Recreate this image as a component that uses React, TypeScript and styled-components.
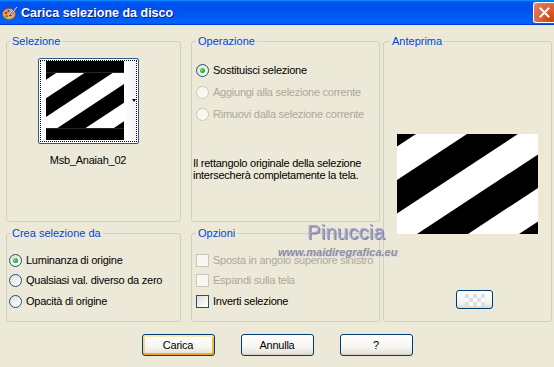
import React from "react";
import styled, { createGlobalStyle, css } from "styled-components";

const GlobalStyle = createGlobalStyle`
  html, body { margin: 0; padding: 0; background: #ECE9D8; }
  body { font-family: "Liberation Sans", Arial, sans-serif; font-size: 11px; letter-spacing: -0.25px; color: #000; }
  * { box-sizing: border-box; }
`;

const Window = styled.div`
  position: relative;
  width: 554px;
  height: 367px;
  background: #ece9d8;
  display: flex;
  flex-direction: column;
  overflow: hidden;
`;

const TitleBar = styled.div`
  height: 25px;
  flex: none;
  display: flex;
  align-items: center;
  padding: 0 0 0 2px;
  background: linear-gradient(
    180deg,
    #0997ff 0%,
    #0053ee 8%,
    #0050ee 40%,
    #0062f8 86%,
    #0062f8 92%,
    #005bff 94%,
    #003dd7 96%,
    #003dd7 100%
  );
`;

const TitleText = styled.div`
  flex: 1;
  margin-left: 3px;
  color: #fff;
  font-family: "Liberation Sans", Arial, sans-serif;
  font-weight: bold;
  font-size: 12.5px;
  letter-spacing: 0;
  text-shadow: 1px 1px 0 #0a1883;
`;

const CloseButton = styled.div`
  width: 21px;
  height: 21px;
  border: 1px solid #fff;
  border-right: none;
  border-radius: 3px 0 0 3px;
  background: radial-gradient(circle at 85% 85%, #cc4600 0%, #dc5a27 35%, #e07050 70%, #e8886a 100%);
  display: flex;
  align-items: center;
  justify-content: center;
`;

const Body = styled.div`
  display: flex;
  flex-direction: column;
  padding: 16px 0 0 6px;
`;

const Panels = styled.div`
  display: flex;
  align-items: flex-start;
  gap: 3px;
`;

const LeftGrid = styled.div`
  display: grid;
  grid-template-columns: 175px 189px;
  grid-template-rows: 181px 89px;
  column-gap: 10px;
  row-gap: 11px;
`;

const Group = styled.div<{ $w?: number; $h?: number }>`
  position: relative;
  border: 1px solid #d0d0bf;
  border-radius: 3px;
  ${(p) =>
    p.$w &&
    css`
      width: ${p.$w}px;
    `}
  ${(p) =>
    p.$h &&
    css`
      height: ${p.$h}px;
    `}
`;

const GroupLabel = styled.span<{ $left?: number }>`
  position: absolute;
  top: -7px;
  left: ${(p) => p.$left ?? 3}px;
  padding: 0 2px;
  line-height: 13px;
  background: #ece9d8;
  color: #0046d5;
  letter-spacing: 0;
`;

const SelContent = styled.div`
  display: flex;
  flex-direction: column;
  align-items: center;
  padding: 16px 11px 0 0;
`;

const ThumbFrame = styled.div`
  width: 101px;
  height: 86px;
  border: 1px solid #2b5d8c;
  border-radius: 2px;
  background: #fff;
  padding: 1px;
`;

const FocusRing = styled.div`
  height: 100%;
  border: 1px dotted #000;
  display: flex;
  padding-left: 5px;
`;

const ArrowCol = styled.div`
  flex: 1;
  display: flex;
  align-items: center;
  justify-content: flex-end;
  background: linear-gradient(90deg, #ffffff 0%, #f3f3f3 100%);
`;

const DownArrow = styled.span`
  width: 0;
  height: 0;
  border-left: 2.5px solid transparent;
  border-right: 2.5px solid transparent;
  border-top: 3px solid #000;
  margin-top: -1px;
`;

const FileName = styled.div`
  margin-top: 10px;
  line-height: 13px;
`;

const Stack = styled.div<{ $pt: number; $pl: number }>`
  display: flex;
  flex-direction: column;
  padding: ${(p) => p.$pt}px 0 0 ${(p) => p.$pl}px;
`;

const OptionRow = styled.div<{ $h: number; $disabled?: boolean }>`
  height: ${(p) => p.$h}px;
  display: flex;
  align-items: center;
  gap: 4px;
  line-height: 13px;
  white-space: nowrap;
  color: ${(p) => (p.$disabled ? "#aca899" : "#000")};
`;

const Radio = styled.span<{ $checked?: boolean; $disabled?: boolean }>`
  position: relative;
  flex: none;
  width: 13px;
  height: 13px;
  border-radius: 50%;
  border: 1px solid ${(p) => (p.$disabled ? "#cac8bb" : "#1c5180")};
  background: ${(p) =>
    p.$disabled ? "#f8f7f2" : "linear-gradient(135deg, #dcdcd7 0%, #f4f4f0 60%, #ffffff 100%)"};
  ${(p) =>
    p.$checked &&
    css`
      &::after {
        content: "";
        position: absolute;
        left: 3px;
        top: 3px;
        width: 5px;
        height: 5px;
        border-radius: 50%;
        background: radial-gradient(circle at 35% 35%, #6ee46a 0%, #21a121 70%, #1a8a1a 100%);
      }
    `}
`;

const Check = styled.span<{ $disabled?: boolean }>`
  flex: none;
  width: 13px;
  height: 13px;
  border: 1px solid ${(p) => (p.$disabled ? "#cac8bb" : "#1c5180")};
  background: ${(p) =>
    p.$disabled ? "#f8f7f2" : "linear-gradient(135deg, #dcdcd7 0%, #f4f4f0 60%, #ffffff 100%)"};
`;

const Description = styled.div`
  margin: 32px 0 0 -3px;
  line-height: 12px;
`;

const PreviewContent = styled.div`
  display: flex;
  flex-direction: column;
  align-items: center;
  padding-top: 92px;
`;

const SmallButton = styled.div`
  margin: 56px 0 0 14px;
  width: 37px;
  height: 19px;
  border: 1px solid #003c74;
  border-radius: 3px;
  background: linear-gradient(180deg, #ffffff 0%, #f4f3ee 70%, #dcd8cc 100%);
  display: flex;
  align-items: center;
  justify-content: center;
`;

const ButtonRow = styled.div`
  display: flex;
  justify-content: center;
  gap: 26px;
  margin: 12px 6px 0 0;
`;

const Button = styled.div<{ $default?: boolean }>`
  width: 73px;
  height: 22px;
  border: 1px solid #003c74;
  border-radius: 3px;
  background: linear-gradient(180deg, #ffffff 0%, #f6f5f0 60%, #e8e6dc 88%, #d6d0c5 100%);
  display: flex;
  align-items: center;
  justify-content: center;
  line-height: 13px;
  ${(p) =>
    p.$default &&
    css`
      box-shadow: inset 0 2px 0 #ffe8b0, inset 0 -2px 0 #f0a82a, inset 2px 0 0 #fbd68a, inset -2px 0 0 #f2b748;
    `}
`;

const Watermark = styled.div`
  position: absolute;
  left: 307px;
  top: 221px;
  font-family: "Liberation Sans", Arial, sans-serif;
  font-size: 20px;
  letter-spacing: 0.3px;
  color: #a5a5c8;
  text-shadow: 1px 1px 0 #7c7ca6;
  pointer-events: none;
`;

const WatermarkUrl = styled.div`
  position: absolute;
  left: 278px;
  top: 246px;
  font-family: "Liberation Sans", Arial, sans-serif;
  font-style: italic;
  font-weight: bold;
  font-size: 11px;
  letter-spacing: 0;
  color: #8e8e9e;
  text-shadow: 1px 1px 0 #d8d8e0;
  pointer-events: none;
`;

const STRIPE_STARTS = [-32, 70, 172, 274];

function Stripes({ width, height, letterbox }: { width: number; height: number; letterbox?: boolean }) {
  const vbH = letterbox ? (height * 141) / width : 100;
  const off = (vbH - 100) / 2;
  const id = letterbox ? "clipA" : "clipB";
  return (
    <svg width={width} height={height} viewBox={`0 ${-off} 141 ${vbH}`} preserveAspectRatio="none" style={{ display: "block", flex: "none" }}>
      <rect x={0} y={-off} width={141} height={vbH} fill="#000" />
      <rect x={0} y={0} width={141} height={100} fill="#fff" />
      <clipPath id={id}>
        <rect x={0} y={0} width={141} height={100} />
      </clipPath>
      <g clipPath={`url(#${id})`}>
        {STRIPE_STARTS.map((a) => (
          <polygon key={a} points={`${a},0 ${a + 51},0 ${a + 51 - 152},100 ${a - 152},100`} fill="#000" />
        ))}
      </g>
    </svg>
  );
}

function AppIcon() {
  return (
    <svg width="16" height="16" viewBox="0 0 16 16" style={{ flex: "none" }}>
      <ellipse cx="7" cy="9" rx="6.5" ry="5.5" fill="#f0a868" stroke="#9a4a20" strokeWidth="0.8" />
      <circle cx="4" cy="8" r="1.3" fill="#d02020" />
      <circle cx="6.5" cy="6" r="1.2" fill="#2060d0" />
      <circle cx="4.5" cy="11.2" r="1.2" fill="#30a030" />
      <circle cx="8" cy="11.5" r="1.1" fill="#f0e030" />
      <path d="M8 10 L14.5 1.5 L15.5 2.3 L9.2 10.8 Z" fill="#ffffff" stroke="#2a3a90" strokeWidth="0.7" />
      <path d="M7.2 10.3 L8.3 9.5 L9.3 10.6 L7.8 12 Z" fill="#333" />
    </svg>
  );
}

function CloseX() {
  return (
    <svg width="11" height="11" viewBox="0 0 11 11" style={{ marginLeft: 1 }}>
      <path d="M1.5 1.5 L9.5 9.5 M9.5 1.5 L1.5 9.5" stroke="#fff" strokeWidth="2" strokeLinecap="square" />
    </svg>
  );
}

function Checker() {
  const cells: React.ReactNode[] = [];
  for (let r = 0; r < 3; r++) {
    for (let c = 0; c < 5; c++) {
      if ((r + c) % 2 === 0) cells.push(<rect key={`${r}-${c}`} x={c * 4} y={r * 4} width={4} height={4} fill="#dedede" />);
    }
  }
  return (
    <svg width="20" height="12" viewBox="0 0 20 12">
      <rect width="20" height="12" fill="#fbfbfb" />
      {cells}
    </svg>
  );
}

export default function App() {
  return (
    <>
      <GlobalStyle />
      <Window>
        <TitleBar>
          <AppIcon />
          <TitleText>Carica selezione da disco</TitleText>
          <CloseButton>
            <CloseX />
          </CloseButton>
        </TitleBar>
        <Body>
          <Panels>
            <LeftGrid>
              <Group>
                <GroupLabel>Selezione</GroupLabel>
                <SelContent>
                  <ThumbFrame>
                    <FocusRing>
                      <Stripes width={78} height={79} letterbox />
                      <ArrowCol>
                        <DownArrow />
                      </ArrowCol>
                    </FocusRing>
                  </ThumbFrame>
                  <FileName>Msb_Anaiah_02</FileName>
                </SelContent>
              </Group>
              <Group>
                <GroupLabel $left={4}>Operazione</GroupLabel>
                <Stack $pt={17} $pl={4}>
                  <OptionRow $h={22}>
                    <Radio $checked />
                    Sostituisci selezione
                  </OptionRow>
                  <OptionRow $h={22} $disabled>
                    <Radio $disabled />
                    Aggiungi alla selezione corrente
                  </OptionRow>
                  <OptionRow $h={22} $disabled>
                    <Radio $disabled />
                    Rimuovi dalla selezione corrente
                  </OptionRow>
                  <Description>
                    Il rettangolo originale della selezione
                    <br />
                    intersecherà completamente la tela.
                  </Description>
                </Stack>
              </Group>
              <Group>
                <GroupLabel>Crea selezione da</GroupLabel>
                <Stack $pt={16} $pl={2}>
                  <OptionRow $h={20.5}>
                    <Radio $checked />
                    Luminanza di origine
                  </OptionRow>
                  <OptionRow $h={20.5}>
                    <Radio />
                    Qualsiasi val. diverso da zero
                  </OptionRow>
                  <OptionRow $h={20.5}>
                    <Radio />
                    Opacità di origine
                  </OptionRow>
                </Stack>
              </Group>
              <Group>
                <GroupLabel $left={4}>Opzioni</GroupLabel>
                <Stack $pt={16} $pl={4}>
                  <OptionRow $h={20.5} $disabled>
                    <Check $disabled />
                    Sposta in angolo superiore sinistro
                  </OptionRow>
                  <OptionRow $h={20.5} $disabled>
                    <Check $disabled />
                    Espandi sulla tela
                  </OptionRow>
                  <OptionRow $h={20.5}>
                    <Check />
                    Inverti selezione
                  </OptionRow>
                </Stack>
              </Group>
            </LeftGrid>
            <Group $w={169} $h={281}>
              <GroupLabel $left={6}>Anteprima</GroupLabel>
              <PreviewContent>
                <Stripes width={141} height={100} />
                <SmallButton>
                  <Checker />
                </SmallButton>
              </PreviewContent>
            </Group>
          </Panels>
          <ButtonRow>
            <Button $default>Carica</Button>
            <Button>Annulla</Button>
            <Button>?</Button>
          </ButtonRow>
        </Body>
        <Watermark>Pinuccia</Watermark>
        <WatermarkUrl>www.maidiregrafica.eu</WatermarkUrl>
      </Window>
    </>
  );
}
